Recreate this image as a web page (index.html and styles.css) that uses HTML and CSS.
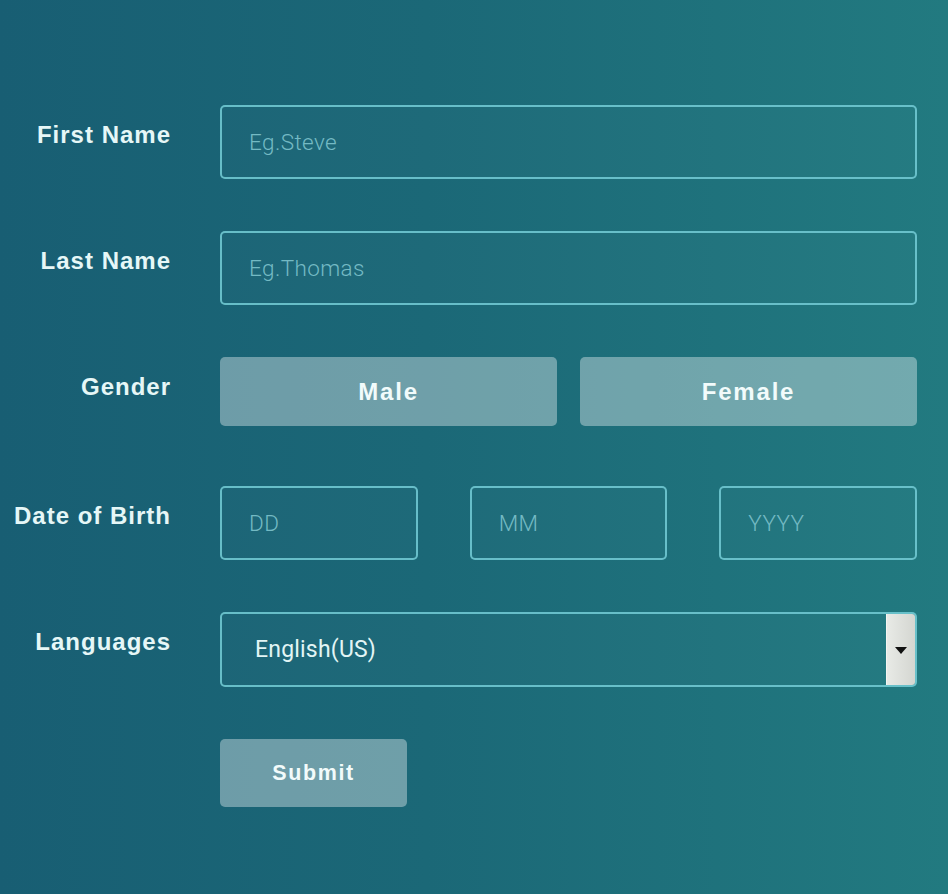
FILE: index.html
```html
<!DOCTYPE html>
<html lang="en">
<head>
<meta charset="utf-8">
<title>Form</title>
<link rel="stylesheet" href="styles.css">
</head>
<body>
<form class="form">
  <label class="label" for="fn">First Name</label>
  <input class="field" id="fn" type="text" placeholder="Eg.Steve">

  <label class="label" for="ln">Last Name</label>
  <input class="field" id="ln" type="text" placeholder="Eg.Thomas">

  <span class="label">Gender</span>
  <div class="gender">
    <button type="button" class="btn choice">Male</button>
    <button type="button" class="btn choice">Female</button>
  </div>

  <span class="label">Date of Birth</span>
  <div class="dob">
    <input class="field" type="text" placeholder="DD">
    <input class="field" type="text" placeholder="MM">
    <input class="field" type="text" placeholder="YYYY">
  </div>

  <span class="label">Languages</span>
  <div class="select">
    <span class="select-value">English(US)</span>
    <span class="select-btn"><span class="tri"></span></span>
  </div>

  <span></span>
  <div class="actions">
    <button type="submit" class="btn submit">Submit</button>
  </div>
</form>
</body>
</html>
```
FILE: styles.css
```css
html, body {
  margin: 0;
  padding: 0;
  height: 100%;
}
body {
  width: 948px;
  height: 894px;
  overflow: hidden;
  background: linear-gradient(90deg, #185e73 0%, #1b6877 45%, #227a80 100%);
  font-family: "Liberation Sans", Arial, sans-serif;
}
.form {
  display: grid;
  grid-template-columns: 170px 1fr;
  column-gap: 50px;
  row-gap: 52px;
  padding: 105px 31px 0 0;
  align-items: start;
}
.label {
  text-align: right;
  color: #e6f7f7;
  font-weight: bold;
  font-size: 24px;
  line-height: 30px;
  letter-spacing: 1px;
  padding-top: 15px;
  margin-right: -1px;
}
.field {
  box-sizing: border-box;
  height: 74px;
  width: 100%;
  border: 2px solid rgba(112, 200, 210, 0.9);
  border-radius: 5px;
  background: rgba(255, 255, 255, 0.015);
  padding: 0 0 0 27px;
  font-family: Roboto, "Liberation Sans", sans-serif;
  font-size: 22.5px;
  letter-spacing: 0.4px;
  color: #e0f4f4;
  outline: none;
}
.field::placeholder {
  color: #74bac4;
  font-weight: 300;
}
.gender {
  display: flex;
  gap: 23px;
  margin-bottom: 8px;
}
.btn {
  border: none;
  border-radius: 5px;
  background: rgba(255, 255, 255, 0.37);
  color: #f2fbfb;
  font-family: "Liberation Sans", Arial, sans-serif;
  font-weight: bold;
  cursor: pointer;
}
.choice {
  flex: 1;
  height: 69px;
  font-size: 24px;
  letter-spacing: 1.8px;
  padding-top: 2px;
}
.dob {
  display: flex;
  gap: 52px;
}
.dob .field {
  flex: 1;
  min-width: 0;
}
.select {
  box-sizing: border-box;
  height: 75px;
  display: flex;
  align-items: stretch;
  border: 2px solid rgba(112, 200, 210, 0.9);
  border-radius: 5px;
  background: rgba(255, 255, 255, 0.015);
}
.select-value {
  flex: 1;
  display: flex;
  align-items: center;
  padding-left: 33px;
  font-family: Roboto, "Liberation Sans", sans-serif;
  font-size: 23px;
  letter-spacing: 0.2px;
  color: #e2f5f5;
}
.select-btn {
  width: 28px;
  margin: 0;
  border-left: 1px solid #f4f5f2;
  border-radius: 0 3px 3px 0;
  background: linear-gradient(90deg, #e8eae6, #d4d6d1);
  display: flex;
  align-items: center;
  justify-content: center;
}
.tri {
  width: 0;
  height: 0;
  border-left: 6px solid transparent;
  border-right: 6px solid transparent;
  border-top: 7px solid #111;
  margin-top: 1px;
}
.actions {
  display: flex;
}
.submit {
  width: 187px;
  height: 68px;
  font-size: 21.5px;
  letter-spacing: 1.6px;
}
```
